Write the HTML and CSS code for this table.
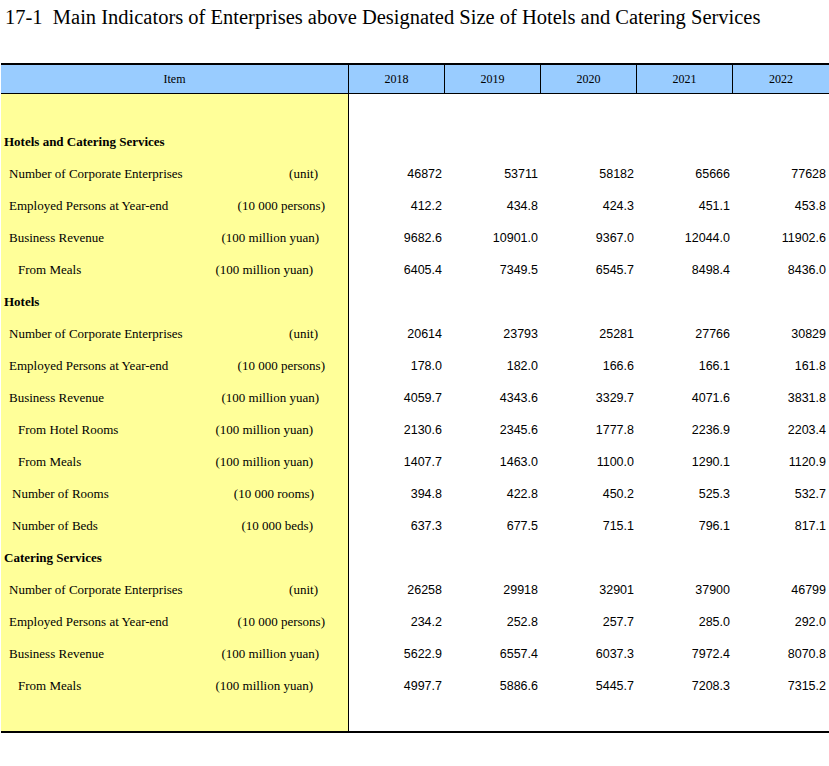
FILE: index.html
```html
<!DOCTYPE html>
<html lang="en">
<head>
<meta charset="utf-8">
<title>17-1 Main Indicators of Enterprises above Designated Size of Hotels and Catering Services</title>
<link rel="stylesheet" href="styles.css">
</head>
<body>
<h1 class="title">17-1&nbsp; Main Indicators of Enterprises above Designated Size of Hotels and Catering Services</h1>
<table class="stats">
  <colgroup>
    <col class="c-item"><col class="c-year"><col class="c-year"><col class="c-year"><col class="c-year"><col class="c-year">
  </colgroup>
  <thead>
    <tr class="head">
      <th>Item</th><th>2018</th><th>2019</th><th>2020</th><th>2021</th><th class="last">2022</th>
    </tr>
  </thead>
  <tbody>
    <tr class="row"><td class="item"></td><td></td><td></td><td></td><td></td><td></td></tr>
    <tr class="row"><td class="item"><div class="sec">Hotels and Catering Services</div></td><td></td><td></td><td></td><td></td><td></td></tr>
    <tr class="row"><td class="item"><div class="lab i1 u-unit"><span>Number of Corporate Enterprises</span><span>(unit)</span></div></td><td>46872</td><td>53711</td><td>58182</td><td>65666</td><td>77628</td></tr>
    <tr class="row"><td class="item"><div class="lab i1 u-pers"><span>Employed Persons at Year-end</span><span>(10 000 persons)</span></div></td><td>412.2</td><td>434.8</td><td>424.3</td><td>451.1</td><td>453.8</td></tr>
    <tr class="row"><td class="item"><div class="lab i1 u-rev"><span>Business Revenue</span><span>(100 million yuan)</span></div></td><td>9682.6</td><td>10901.0</td><td>9367.0</td><td>12044.0</td><td>11902.6</td></tr>
    <tr class="row"><td class="item"><div class="lab i2 u-sub"><span>From Meals</span><span>(100 million yuan)</span></div></td><td>6405.4</td><td>7349.5</td><td>6545.7</td><td>8498.4</td><td>8436.0</td></tr>
    <tr class="row"><td class="item"><div class="sec">Hotels</div></td><td></td><td></td><td></td><td></td><td></td></tr>
    <tr class="row"><td class="item"><div class="lab i1 u-unit"><span>Number of Corporate Enterprises</span><span>(unit)</span></div></td><td>20614</td><td>23793</td><td>25281</td><td>27766</td><td>30829</td></tr>
    <tr class="row"><td class="item"><div class="lab i1 u-pers"><span>Employed Persons at Year-end</span><span>(10 000 persons)</span></div></td><td>178.0</td><td>182.0</td><td>166.6</td><td>166.1</td><td>161.8</td></tr>
    <tr class="row"><td class="item"><div class="lab i1 u-rev"><span>Business Revenue</span><span>(100 million yuan)</span></div></td><td>4059.7</td><td>4343.6</td><td>3329.7</td><td>4071.6</td><td>3831.8</td></tr>
    <tr class="row"><td class="item"><div class="lab i2 u-sub"><span>From Hotel Rooms</span><span>(100 million yuan)</span></div></td><td>2130.6</td><td>2345.6</td><td>1777.8</td><td>2236.9</td><td>2203.4</td></tr>
    <tr class="row"><td class="item"><div class="lab i2 u-sub"><span>From Meals</span><span>(100 million yuan)</span></div></td><td>1407.7</td><td>1463.0</td><td>1100.0</td><td>1290.1</td><td>1120.9</td></tr>
    <tr class="row"><td class="item"><div class="lab i3 u-rooms"><span>Number of Rooms</span><span>(10 000 rooms)</span></div></td><td>394.8</td><td>422.8</td><td>450.2</td><td>525.3</td><td>532.7</td></tr>
    <tr class="row"><td class="item"><div class="lab i3 u-beds"><span>Number of Beds</span><span>(10 000 beds)</span></div></td><td>637.3</td><td>677.5</td><td>715.1</td><td>796.1</td><td>817.1</td></tr>
    <tr class="row"><td class="item"><div class="sec">Catering Services</div></td><td></td><td></td><td></td><td></td><td></td></tr>
    <tr class="row"><td class="item"><div class="lab i1 u-unit"><span>Number of Corporate Enterprises</span><span>(unit)</span></div></td><td>26258</td><td>29918</td><td>32901</td><td>37900</td><td>46799</td></tr>
    <tr class="row"><td class="item"><div class="lab i1 u-pers"><span>Employed Persons at Year-end</span><span>(10 000 persons)</span></div></td><td>234.2</td><td>252.8</td><td>257.7</td><td>285.0</td><td>292.0</td></tr>
    <tr class="row"><td class="item"><div class="lab i1 u-rev"><span>Business Revenue</span><span>(100 million yuan)</span></div></td><td>5622.9</td><td>6557.4</td><td>6037.3</td><td>7972.4</td><td>8070.8</td></tr>
    <tr class="row"><td class="item"><div class="lab i2 u-sub"><span>From Meals</span><span>(100 million yuan)</span></div></td><td>4997.7</td><td>5886.6</td><td>5445.7</td><td>7208.3</td><td>7315.2</td></tr>
    <tr class="row end"><td class="item"></td><td></td><td></td><td></td><td></td><td></td></tr>
  </tbody>
</table>
</body>
</html>
```
FILE: styles.css
```css
html, body {
  margin: 0;
  padding: 0;
  background: #fff;
  color: #000;
}

body {
  overflow-x: hidden;
}

.title {
  margin: 0;
  padding: 5px 0 0 5px;
  height: 29px;
  box-sizing: border-box;
  font-family: "Liberation Serif", "Times New Roman", serif;
  font-weight: normal;
  font-size: 20.5px;
  line-height: 24px;
  white-space: nowrap;
}

.stats {
  margin: 34px 0 0 1px;
  width: 828px;
  table-layout: fixed;
  border-collapse: separate;
  border-spacing: 0;
  border-top: 2px solid #000;
  border-bottom: 2px solid #000;
}

.c-item { width: 348px; }
.c-year { width: 96px; }

.head th {
  height: 28px;
  padding: 0;
  background: #99ccff;
  border-right: 1px solid #000;
  border-bottom: 1px solid #000;
  font-family: "Liberation Serif", "Times New Roman", serif;
  font-weight: normal;
  font-size: 12px;
  text-align: center;
  vertical-align: middle;
}

.head th.last {
  border-right: 0;
}

.row td {
  height: 32px;
  padding: 0 3px 0 0;
  font-family: "Liberation Sans", Arial, sans-serif;
  font-size: 12.5px;
  text-align: right;
  vertical-align: middle;
  white-space: nowrap;
}

.row.end td {
  height: 29px;
}

.row td.item {
  padding: 0;
  background: #ffff99;
  border-right: 1px solid #000;
  text-align: left;
  font-family: "Liberation Serif", "Times New Roman", serif;
  font-size: 13px;
}

.sec {
  padding-left: 3px;
  font-weight: bold;
}

.lab {
  display: flex;
  justify-content: space-between;
}

.i1 { padding-left: 8px; }
.i2 { padding-left: 17px; }
.i3 { padding-left: 11px; }

.u-unit { padding-right: 30px; }
.u-pers { padding-right: 23px; }
.u-rev { padding-right: 29px; }
.u-sub { padding-right: 35px; }
.u-rooms { padding-right: 34px; }
.u-beds { padding-right: 35px; }
```
